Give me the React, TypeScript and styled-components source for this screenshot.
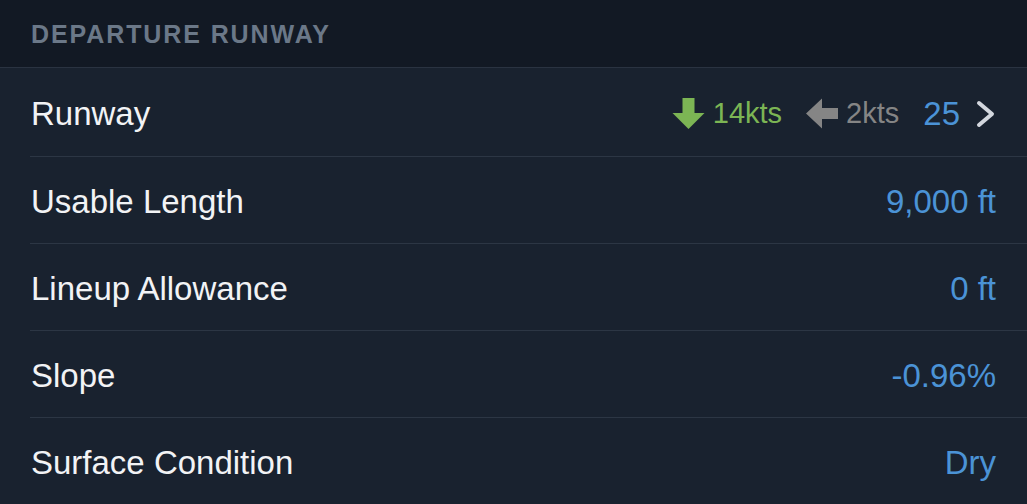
import React from "react";
import styled, { createGlobalStyle } from "styled-components";

const GlobalStyle = createGlobalStyle`
  html, body {
    margin: 0;
    padding: 0;
    background: #19222f;
    font-family: "Liberation Sans", Arial, sans-serif;
  }
`;

const Panel = styled.div`
  width: 1027px;
  height: 504px;
  overflow: hidden;
  background: #19222f;
  display: flex;
  flex-direction: column;
`;

const SectionHeader = styled.div`
  height: 68px;
  flex-shrink: 0;
  box-sizing: border-box;
  padding: 2px 31px 0;
  display: flex;
  align-items: center;
  background: #121924;
  border-bottom: 1px solid #2a3341;
  color: #6b7888;
  font-size: 25px;
  font-weight: 600;
  letter-spacing: 1.9px;
`;

const List = styled.div`
  padding-left: 30px;
  display: flex;
  flex-direction: column;
`;

const Row = styled.div<{ $last?: boolean }>`
  height: 87px;
  flex-shrink: 0;
  box-sizing: border-box;
  display: flex;
  align-items: center;
  justify-content: space-between;
  padding: 3px 31px 0 0;
  border-bottom: ${(p) => (p.$last ? "none" : "1px solid #2c3644")};

  &:first-child {
    height: 89px;
  }
`;

const Label = styled.div`
  color: #f2f3f5;
  font-size: 33px;
  padding-left: 1px;
`;

const Value = styled.div`
  color: #4b93d6;
  font-size: 33px;
`;

const Wind = styled.div`
  display: flex;
  align-items: center;
  gap: 8px;
`;

const WindText = styled.span<{ $color: string }>`
  color: ${(p) => p.$color};
  font-size: 29px;
`;

const RunwayPicker = styled.div`
  display: flex;
  align-items: center;
`;

const Group = styled.div`
  display: flex;
  align-items: center;
  gap: 24px;
`;

const Chevron = styled.svg`
  margin-left: 16px;
`;

function ArrowDown({ color }: { color: string }) {
  return (
    <svg width="33" height="32" viewBox="0 0 33 32">
      <path d="M10.5 0 H22.5 V15 H32.5 L16.5 31 L0.5 15 H10.5 Z" fill={color} />
    </svg>
  );
}

function ArrowLeft({ color }: { color: string }) {
  return (
    <svg width="32" height="31" viewBox="0 0 32 31">
      <path d="M0 15.5 L16 0.5 V10 H32 V21 H16 V30.5 Z" fill={color} />
    </svg>
  );
}

const rows = [
  { label: "Usable Length", value: "9,000 ft" },
  { label: "Lineup Allowance", value: "0 ft" },
  { label: "Slope", value: "-0.96%" },
  { label: "Surface Condition", value: "Dry" },
];

export default function App() {
  return (
    <Panel>
      <GlobalStyle />
      <SectionHeader>DEPARTURE RUNWAY</SectionHeader>
      <List>
        <Row>
          <Label>Runway</Label>
          <Group>
            <Wind>
              <ArrowDown color="#7cb554" />
              <WindText $color="#7cb554">14kts</WindText>
            </Wind>
            <Wind>
              <ArrowLeft color="#858585" />
              <WindText $color="#858585">2kts</WindText>
            </Wind>
            <RunwayPicker>
              <Value>25</Value>
              <Chevron width="20" height="28" viewBox="0 0 20 28">
                <path
                  d="M3 3 L16 14 L3 25"
                  stroke="#d3d7de"
                  strokeWidth="4"
                  fill="none"
                  strokeLinecap="round"
                  strokeLinejoin="round"
                />
              </Chevron>
            </RunwayPicker>
          </Group>
        </Row>
        {rows.map((r, i) => (
          <Row key={r.label} $last={i === rows.length - 1}>
            <Label>{r.label}</Label>
            <Value>{r.value}</Value>
          </Row>
        ))}
      </List>
    </Panel>
  );
}
